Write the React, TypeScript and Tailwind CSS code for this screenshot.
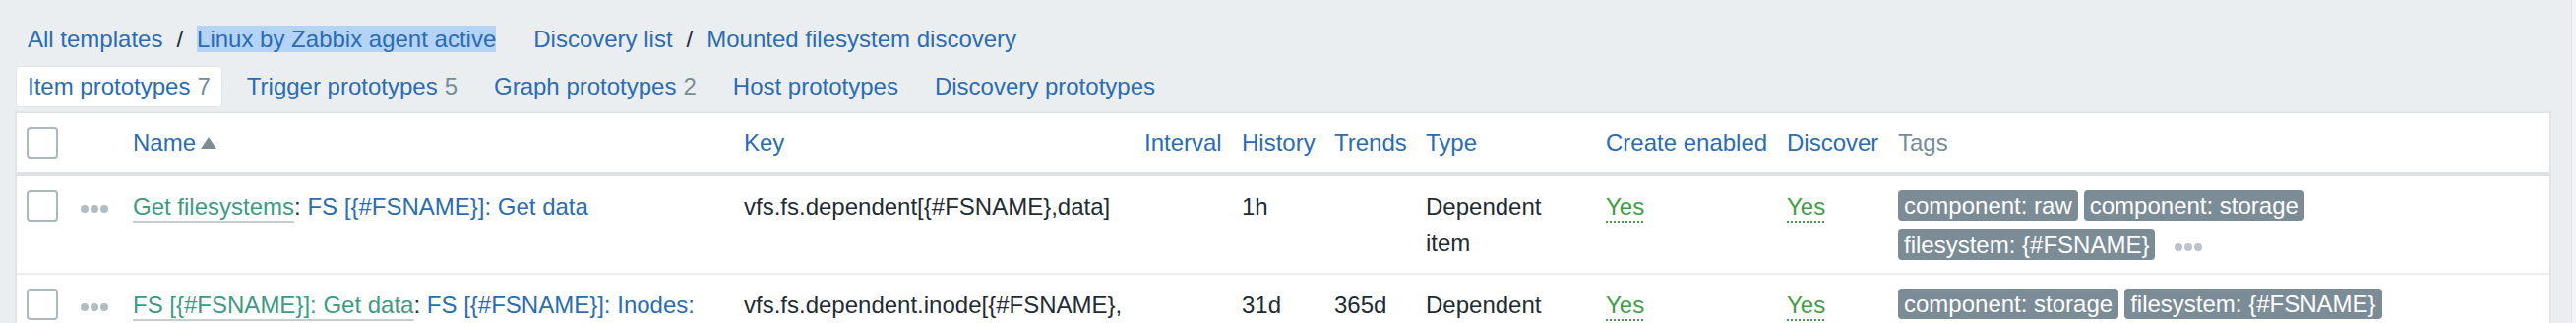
const cols =
  'grid grid-cols-[55px_53px_621px_407px_99px_94px_93px_183px_184px_113px_1fr]';

function Checkbox() {
  return <div className="h-[32px] w-[32px] rounded-[4px] border-2 border-[#acb8c0] bg-white" />;
}

function Dots({ color = 'bg-[#b1bbc2]' }: { color?: string }) {
  return (
    <span className="inline-flex items-center gap-[2px] align-middle">
      <span className={`h-[8px] w-[8px] rounded-full ${color}`} />
      <span className={`h-[8px] w-[8px] rounded-full ${color}`} />
      <span className={`h-[8px] w-[8px] rounded-full ${color}`} />
    </span>
  );
}

function Tag({ children }: { children: React.ReactNode }) {
  return (
    <span className="inline-block h-[31px] rounded-[4px] bg-[#7b8c97] px-[6px] leading-[31px] text-white whitespace-nowrap">
      {children}
    </span>
  );
}

function Yes() {
  return (
    <span className="text-[#429e47] underline decoration-dotted decoration-2 underline-offset-[6px]">Yes</span>
  );
}

type Row = {
  master: string;
  name: string;
  key: React.ReactNode;
  history: string;
  trends: string;
  tags: string[];
  more?: boolean;
};

const rows: Row[] = [
  {
    master: 'Get filesystems',
    name: 'FS [{#FSNAME}]: Get data',
    key: 'vfs.fs.dependent[{#FSNAME},data]',
    history: '1h',
    trends: '',
    tags: ['component: raw', 'component: storage', 'filesystem: {#FSNAME}'],
    more: true,
  },
  {
    master: 'FS [{#FSNAME}]: Get data',
    name: 'FS [{#FSNAME}]: Inodes: Free, in %',
    key: (
      <>
        vfs.fs.dependent.inode[{'{#FSNAME}'},
        <br />
        pfree]
      </>
    ),
    history: '31d',
    trends: '365d',
    tags: ['component: storage', 'filesystem: {#FSNAME}'],
  },
];

export default function App() {
  return (
    <div className="flex h-[328px] w-full overflow-hidden bg-[#ebeef0] font-['Liberation_Sans',Arial,sans-serif] text-[24px] text-[#1f2c33]">
      <div className="flex-1 pl-[15px] pr-[20px]">
        {/* breadcrumbs */}
        <div className="flex h-[53px] items-start pt-[26px] leading-[27px] text-[#2b6cb2]">
          <span className="ml-[13px]">All templates</span>
          <span className="mx-[14px] text-[#1f2c33]">/</span>
          <span className="bg-[#b4d3f7]">Linux by Zabbix agent active</span>
          <span className="ml-[38px]">Discovery list</span>
          <span className="mx-[14px] text-[#1f2c33]">/</span>
          <span>Mounted filesystem discovery</span>
        </div>

        {/* tabs */}
        <div className="mt-[14px] ml-px flex gap-[13px] text-[#2b6cb2]">
          <div className="flex h-[42px] items-center rounded-[4px] border border-[#e1e5e8] bg-white px-[11px]">
            Item prototypes <span className="ml-[7px] text-[#768d99]">7</span>
          </div>
          <div className="flex h-[42px] items-center px-[12px]">
            Trigger prototypes <span className="ml-[7px] text-[#768d99]">5</span>
          </div>
          <div className="flex h-[42px] items-center px-[12px]">
            Graph prototypes <span className="ml-[7px] text-[#768d99]">2</span>
          </div>
          <div className="flex h-[42px] items-center px-[12px]">Host prototypes</div>
          <div className="flex h-[42px] items-center px-[12px]">Discovery prototypes</div>
        </div>

        {/* table */}
        <div className="mt-[4px] border-2 border-[#dfe4e7] bg-white">
          <div className={`${cols} h-[64px] items-center border-b-4 border-[#dce2e5] text-[#2b6cb2]`}>
            <div className="pl-[10px]">
              <Checkbox />
            </div>
            <div />
            <div className="flex items-center px-[10px]">
              Name
              <svg className="ml-[5px]" width="16" height="12" viewBox="0 0 16 12">
                <path d="M8 0 L16 12 L0 12 Z" fill="#7d8b95" />
              </svg>
            </div>
            <div className="px-[10px]">Key</div>
            <div className="px-[10px]">Interval</div>
            <div className="px-[10px]">History</div>
            <div className="px-[10px]">Trends</div>
            <div className="px-[10px]">Type</div>
            <div className="px-[10px] whitespace-nowrap">Create enabled</div>
            <div className="px-[10px]">Discover</div>
            <div className="px-[10px] text-[#768d99]">Tags</div>
          </div>

          {rows.map((r, i) => (
            <div
              key={i}
              className={`${cols} h-[100px] items-start border-b-2 border-[#ebeef0] leading-[37px]`}
            >
              <div className="pt-[14px] pl-[10px]">
                <Checkbox />
              </div>
              <div className="px-[10px] pt-[12px]">
                <Dots />
              </div>
              <div className="px-[10px] pt-[12px]">
                <span className="text-[#3f9a84] underline decoration-[#c6ccd0] decoration-2 underline-offset-[6px]">
                  {r.master}
                </span>
                : <span className="text-[#2b6cb2]">{r.name}</span>
              </div>
              <div className="px-[10px] pt-[12px]">{r.key}</div>
              <div className="px-[10px] pt-[12px]" />
              <div className="px-[10px] pt-[12px]">{r.history}</div>
              <div className="px-[10px] pt-[12px]">{r.trends}</div>
              <div className="px-[10px] pt-[12px]">Dependent item</div>
              <div className="px-[10px] pt-[12px]">
                <Yes />
              </div>
              <div className="px-[10px] pt-[12px]">
                <Yes />
              </div>
              <div className="flex flex-wrap items-center gap-x-[6px] gap-y-[9px] px-[10px] pt-[14px] leading-[31px]">
                {r.tags.map((t) => (
                  <Tag key={t}>{t}</Tag>
                ))}
                {r.more && (
                  <span className="ml-[14px]">
                    <Dots color="bg-[#bcc4ca]" />
                  </span>
                )}
              </div>
            </div>
          ))}
        </div>
      </div>
      <div className="w-[5px] border-l border-[#e2e5e8] bg-[#f3f4f5]" />
    </div>
  );
}
